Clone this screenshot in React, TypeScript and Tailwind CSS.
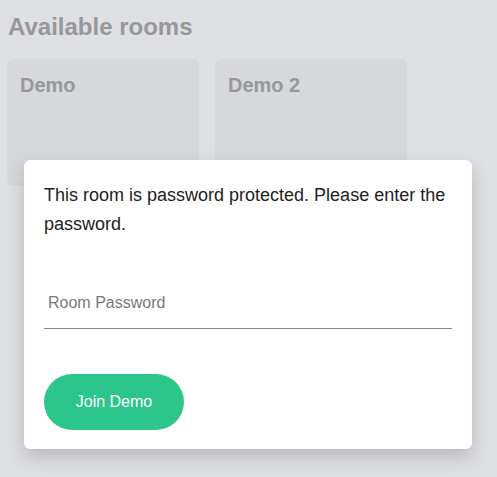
import React from "react";

export default function App() {
  return (
    <div
      className="relative h-[477px] w-[497px] overflow-hidden bg-[#dee0e4]"
      style={{ fontFamily: '"Liberation Sans", Arial, sans-serif' }}
    >
      <div className="px-[7px] pt-[13px]">
        <h1 className="pl-[1px] text-[24px] font-bold leading-[28px] text-[#97989b]">Available rooms</h1>
        <div className="mt-[18px] flex gap-[16px]">
          <div className="h-[127px] w-[192px] rounded-[6px] bg-[#d6d8dc] px-[13px] pt-[14px]">
            <div className="text-[20px] font-bold leading-[24px] text-[#97989b]">Demo</div>
          </div>
          <div className="h-[127px] w-[192px] rounded-[6px] bg-[#d6d8dc] px-[13px] pt-[14px]">
            <div className="text-[20px] font-bold leading-[24px] text-[#97989b]">Demo 2</div>
          </div>
        </div>
      </div>

      <div className="absolute left-[24px] top-[160px] w-[448px] rounded-[6px] bg-white px-[20px] pb-[19px] pt-[21px] shadow-[0_8px_20px_rgba(0,0,0,0.18)]">
        <p className="text-[18px] leading-[29px] text-[#222]">
          This room is password protected. Please enter the password.
        </p>
        <div className="mt-[52px] border-b border-[#888] pb-[13px]">
          <input
            type="password"
            placeholder="Room Password"
            className="w-full bg-transparent px-[4px] text-[16px] leading-[20px] text-[#333] outline-none placeholder:text-[#7a7a7a]"
          />
        </div>
        <button className="mt-[45px] h-[56px] w-[140px] rounded-full bg-[#2cc68c] text-[16px] text-white">
          Join Demo
        </button>
      </div>
    </div>
  );
}
